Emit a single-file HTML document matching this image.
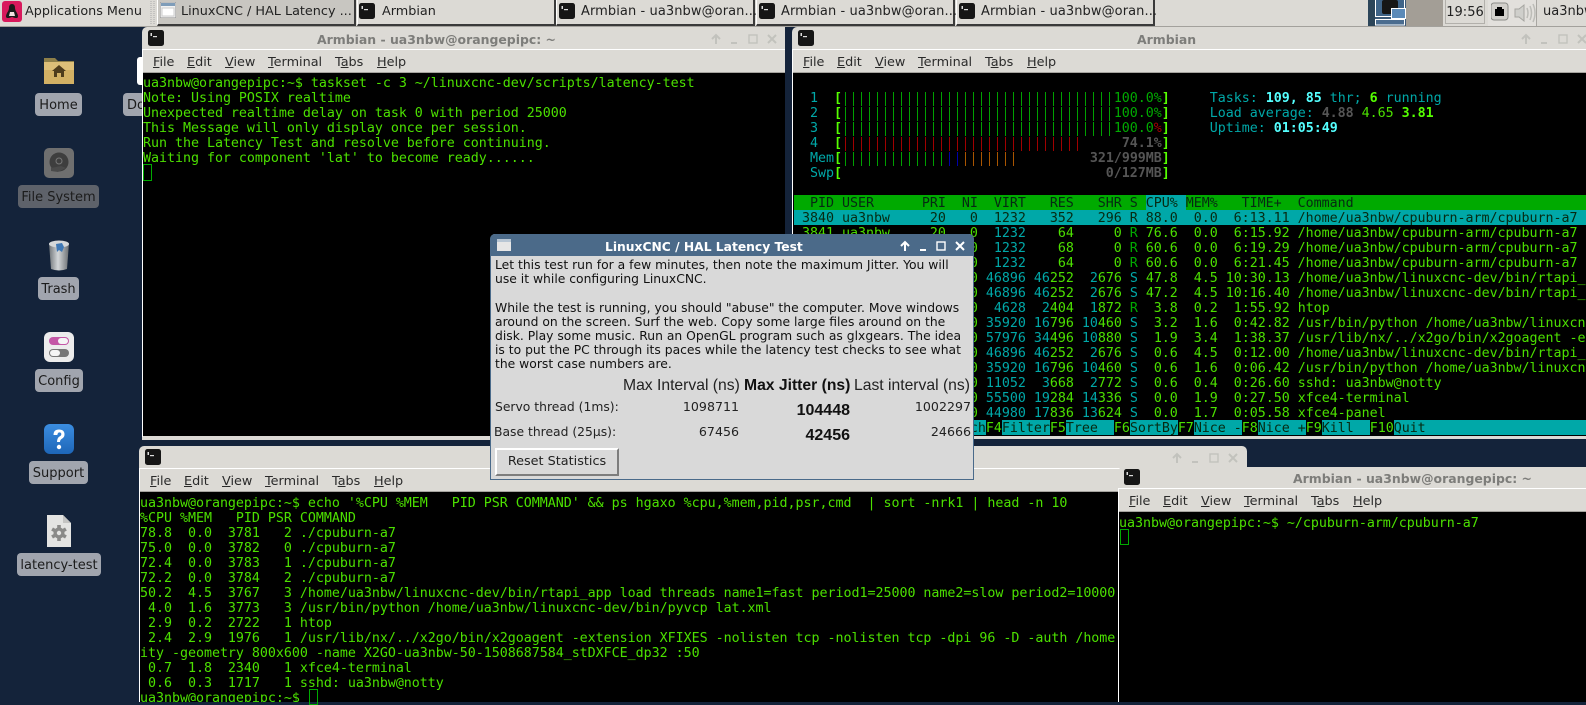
<!DOCTYPE html>
<html><head><meta charset="utf-8"><title>Armbian desktop</title>
<style>
html,body{margin:0;padding:0;width:1586px;height:702px;overflow:hidden;background:#14233a;font-family:"DejaVu Sans",sans-serif;font-size:13px;color:#1c1c1c}
div,pre,svg,span.a{box-sizing:border-box}
.a{position:absolute;white-space:pre}
.bg{background:#dcdad5}
.tb{position:absolute;top:0;height:26px;background:#dcdad5;border-left:1px solid #fff;border-right:2px solid #3a3a3a;border-bottom:2px solid #3a3a3a;width:199px}
.tt{position:absolute;top:3px;line-height:17px;left:24px;white-space:pre;color:#222;font-size:12.8px}
.lng{font-size:13px;letter-spacing:.08px}
.lb{position:absolute;height:23px;line-height:25px;text-align:center;background:#a1a5ae;border-radius:4px;color:#1c1c1c;white-space:pre}
.title{position:absolute;font-weight:bold;font-size:12.45px;color:#7d7d7a;line-height:16px;white-space:pre}
.m{position:absolute;line-height:16px;color:#2a2a2a;white-space:pre;font-size:12.8px}
.m u{text-decoration:underline}
.term{position:absolute;background:#000;overflow:hidden}
pre{position:absolute;margin:0;font-family:"DejaVu Sans Mono",monospace;font-size:13.33px;line-height:15px;color:#4ce000;white-space:pre;letter-spacing:-.03px}
pre .t{color:#00a8a8}pre .c{color:#55ffff;font-weight:bold}pre .g{color:#55ff00;font-weight:bold}
pre .d{color:#555;font-weight:bold}pre .f{color:#00aa00}pre .r{color:#aa0000}
pre .bv,pre .br,pre .bb,pre .bo{color:transparent;background-position:0 50%;background-size:8px 14px;background-repeat:repeat-x}
pre .bv{background-image:linear-gradient(90deg,transparent 3px,#00a000 3px,#00a000 4px,transparent 4px)}
pre .br{background-image:linear-gradient(90deg,transparent 3px,#a00000 3px,#a00000 4px,transparent 4px)}
pre .bb{background-image:linear-gradient(90deg,transparent 3px,#0000aa 3px,#0000aa 4px,transparent 4px)}
pre .bo{background-image:linear-gradient(90deg,transparent 3px,#aa5500 3px,#aa5500 4px,transparent 4px)}
pre .k{color:#062a12}
.cur{position:absolute;border:1px solid #00aa00;width:9px;height:16px}
.dl{position:absolute;line-height:14px;white-space:pre;color:#111;font-size:12.35px}
.h{position:absolute;font-family:"Liberation Sans",sans-serif;font-size:15.7px;line-height:18px;white-space:pre;color:#222}
.n{position:absolute;line-height:14px;font-size:12.6px;white-space:pre;color:#222;text-align:right}
.bn{position:absolute;font-family:"Liberation Sans",sans-serif;font-size:16px;font-weight:bold;line-height:18px;color:#111}
.fk{position:absolute;top:420px;height:15px;background:#000;width:16px}
</style></head><body>
<svg width="0" height="0" style="position:absolute">
<symbol id="ti" viewBox="0 0 16 16"><rect width="16" height="16" rx="2.5" fill="#161616"/><rect x="2.5" y="3" width="1.5" height="3" fill="#ddd"/><rect x="5" y="6" width="4" height="1.2" fill="#ddd"/></symbol>
<symbol id="wb" viewBox="0 0 72 14"><g fill="none" stroke="#c2c2bd" stroke-width="2"><path d="M5 12V3M1 7l4-4 4 4"/><path d="M20 11h6"/><rect x="38" y="3" width="8" height="8" stroke-width="1.4"/><path d="M57 3l8 8M65 3l-8 8"/></g></symbol>
</svg>

<!-- Desktop icons -->
<svg class="a" style="left:44px;top:57px" width="30" height="28" viewBox="0 0 30 28"><path d="M0 1h11l3 3h16v6H0z" fill="#8e7f49"/><rect y="5" width="30" height="22" fill="#d2b064"/><rect y="5" width="30" height="8" fill="#ddbf78"/><path d="M15 8l7 6h-2v6h-3v-4h-4v4H10v-6H8z" fill="#4e3c1c"/></svg>
<div class="lb" style="left:35px;top:93px;width:47px">Home</div>
<svg class="a" style="left:137px;top:57px" width="6" height="28"><rect x="0" width="12" height="28" rx="3" fill="#fff"/></svg>
<div class="lb" style="left:123px;top:93px;width:22px;text-align:left;padding-left:4px;overflow:hidden">Do</div>
<svg class="a" style="left:44px;top:148px" width="30" height="30" viewBox="0 0 30 30"><rect width="30" height="30" rx="5" fill="#6f6f6f"/><circle cx="15" cy="14" r="9.5" fill="#3e3e3e"/><circle cx="15" cy="13" r="3" fill="none" stroke="#777"/><path d="M7 20l10-2 5 2-8 4-7-1z" fill="#4a4a4a"/></svg>
<div class="lb" style="left:18px;top:185px;width:81px;background:#5e626a">File System</div>
<svg class="a" style="left:48px;top:240px" width="22" height="31" viewBox="0 0 22 31"><defs><linearGradient id="tr"><stop offset="0" stop-color="#6f7478"/><stop offset=".45" stop-color="#d4d7d9"/><stop offset="1" stop-color="#6a6e72"/></linearGradient></defs><path d="M1 3h20l-2 26q-8 3-16 0z" fill="url(#tr)"/><ellipse cx="11" cy="4" rx="10" ry="3.5" fill="#d5d8da"/><path d="M8 4l6-1 2 4-2 5-3-2-2 2z" fill="#3f78b5"/></svg>
<div class="lb" style="left:38px;top:277px;width:41px">Trash</div>
<svg class="a" style="left:44px;top:332px" width="30" height="30" viewBox="0 0 30 30"><rect width="30" height="30" rx="6" fill="#ececec"/><rect x="5" y="5" width="20" height="8" rx="4" fill="#c457a6"/><rect x="14" y="6" width="10" height="6" rx="3" fill="#f5f5f5"/><rect x="5" y="17" width="20" height="8" rx="4" fill="#777"/><rect x="6" y="18" width="10" height="6" rx="3" fill="#f5f5f5"/></svg>
<div class="lb" style="left:35px;top:369px;width:48px">Config</div>
<svg class="a" style="left:44px;top:424px" width="30" height="30" viewBox="0 0 30 30"><defs><linearGradient id="su" x2="0" y2="1"><stop offset="0" stop-color="#3b8de0"/><stop offset="1" stop-color="#1e66b8"/></linearGradient></defs><rect width="30" height="30" rx="6" fill="url(#su)"/><path d="M9.5 11q0-5.500 5.500-5.500t5.500 5q0 3-3 4.500-1.500 1-1.500 3h-3q0-4 2.500-5.500 1.800-1 1.800-2.300 0-1.800-1.800-1.800t-2.200 2.600z" fill="#fff"/><circle cx="15" cy="23" r="2.200" fill="#fff"/></svg>
<div class="lb" style="left:29px;top:461px;width:59px">Support</div>
<svg class="a" style="left:47px;top:515px" width="24" height="32" viewBox="0 0 24 32"><path d="M0 0h16l8 8v24H0z" fill="#e4e4e2"/><path d="M16 0l8 8h-8z" fill="#c4c4c2"/><g transform="translate(12 18)" fill="#8a8a88"><circle r="5.500"/><g id="gt"><rect x="-1.800" y="-8" width="3.600" height="16"/><rect x="-1.800" y="-8" width="3.600" height="16" transform="rotate(60)"/><rect x="-1.800" y="-8" width="3.600" height="16" transform="rotate(120)"/></g><circle r="2.200" fill="#e4e4e2"/></g></svg>
<div class="lb" style="left:17px;top:553px;width:84px">latency-test</div>

<!-- Panel -->
<div class="a bg" style="left:0;top:0;width:1586px;height:26px"></div>
<div class="a" style="left:0;top:26px;width:1586px;height:1px;background:#a3a19c"></div>
<svg class="a" style="left:2px;top:1px" width="20" height="21" viewBox="0 0 20 21"><rect width="20" height="21" rx="3" fill="#d8195c"/><path d="M10 3q3 0 3 4 0 2 2 5 2 4 0 5h-2l-3-1-3 1H5q-2-1 0-5 2-3 2-5 0-4 3-4z" fill="#1a1a1a"/><path d="M8 11h4l1 4h-6z" fill="#f0e0e0"/></svg>
<div class="a" style="left:25px;top:3px;line-height:17px;color:#222;font-size:12.75px">Applications Menu</div>
<svg class="a" style="left:150px;top:1px" width="6" height="24"><path d="M1 0v24M4 0v24" stroke="#aaa" stroke-dasharray="1 1" stroke-width="1"/></svg>
<div class="tb" style="left:157px;width:199px;background:#c8c6c1"><svg class="a" style="left:2px;top:2px" width="16" height="16" viewBox="0 0 16 16"><rect width="16" height="16" fill="#f2f2f2" stroke="#8a8a8a"/><rect x="1" y="1" width="14" height="3" fill="#7f9db9"/><rect x="2" y="6" width="12" height="8" fill="#fff" stroke="#ccc"/></svg><span class="tt" style="left:23px">LinuxCNC / HAL Latency ...</span></div>
<div class="tb" style="left:357px"><svg class="a" style="left:1px;top:3px" width="16" height="16"><use href="#ti"/></svg><span class="tt">Armbian</span></div>
<div class="tb" style="left:556px"><svg class="a" style="left:2px;top:3px" width="16" height="16"><use href="#ti"/></svg><span class="tt lng">Armbian - ua3nbw@oran...</span></div>
<div class="tb" style="left:756px"><svg class="a" style="left:2px;top:3px" width="16" height="16"><use href="#ti"/></svg><span class="tt lng">Armbian - ua3nbw@oran...</span></div>
<div class="tb" style="left:956px"><svg class="a" style="left:2px;top:3px" width="16" height="16"><use href="#ti"/></svg><span class="tt lng">Armbian - ua3nbw@oran...</span></div>
<svg class="a" style="left:1368px;top:0" width="75" height="26" viewBox="0 0 75 26"><rect width="38" height="26" fill="#3c5a78"/><rect width="7" height="26" fill="#2c4559"/><rect x="38" width="37" height="26" fill="#a39e96"/><rect x="7.500" y="-1" width="29" height="17.500" fill="#3f6488" stroke="#fff"/><rect x="14" width="16" height="14" rx="2" fill="#161616"/><rect x="23.500" y="8.500" width="14" height="10" fill="#5b8ab8" stroke="#fff"/><rect x="7.500" y="19.500" width="29" height="5.500" fill="#4a6c8f" stroke="#fff"/></svg>
<div class="a" style="left:1445px;top:-1px;width:40px;height:25px;border:1px solid #b2b0ab;text-align:center;line-height:25px;color:#222;font-size:13px">19:56</div>
<div class="a" style="left:1488px;top:0;width:49px;height:26px;background:#e2e0dc;border-right:1px solid #a8a6a1"></div>
<svg class="a" style="left:1491px;top:2px" width="46" height="22" viewBox="0 0 46 22"><rect x="0" y="1" width="17" height="17" rx="3" fill="#d2d0cb" stroke="#8c8c88"/><path d="M4 14V7h2V5h5v2h2v7z" fill="#000"/><path d="M24 7h4l5-4v16l-5-4h-4z" fill="#cfcfcb" stroke="#a5a5a0"/><path d="M36 6q2 5 0 10M39 4q3 7 0 14M42 2q4 9 0 18" fill="none" stroke="#bcbcb7" stroke-width="1.500"/></svg>
<div class="a" style="left:1543px;top:3px;line-height:17px;color:#222">ua3nbw</div>

<!-- Window 1 -->
<div class="a bg" style="left:142px;top:27px;width:643px;height:413px;border-top-left-radius:5px"></div>
<div class="a" style="left:143px;top:49px;width:642px;height:1px;background:#fff"></div>
<div class="a" style="left:142px;top:72px;width:643px;height:1px;background:#a5a39e"></div>
<svg class="a" style="left:148px;top:30px" width="16" height="16"><use href="#ti"/></svg>
<div class="title" style="left:317px;top:32px">Armbian - ua3nbw@orangepipc: ~</div>
<svg class="a" style="left:711px;top:32px" width="72" height="14"><use href="#wb"/></svg>
<div class="m" style="left:153px;top:55px"><u>F</u>ile</div><div class="m" style="left:187px;top:55px"><u>E</u>dit</div><div class="m" style="left:225px;top:55px"><u>V</u>iew</div><div class="m" style="left:268px;top:55px"><u>T</u>erminal</div><div class="m" style="left:335px;top:55px">T<u>a</u>bs</div><div class="m" style="left:377px;top:55px"><u>H</u>elp</div>
<div class="term" style="left:143px;top:73px;width:642px;height:363px"></div>
<div class="a" style="left:142px;top:49px;width:1px;height:388px;background:#fff"></div>
<pre style="left:143px;top:76px">ua3nbw@orangepipc:~$ taskset -c 3 ~/linuxcnc-dev/scripts/latency-test
Note: Using POSIX realtime
Unexpected realtime delay on task 0 with period 25000
This Message will only display once per session.
Run the Latency Test and resolve before continuing.
Waiting for component 'lat' to become ready......</pre>
<div class="cur" style="left:143px;top:164px;height:17px"></div>

<!-- htop window -->
<div class="a bg" style="left:792px;top:27px;width:794px;height:412px;border-top-left-radius:5px"></div>
<div class="a" style="left:793px;top:49px;width:793px;height:1px;background:#fff"></div>
<div class="a" style="left:792px;top:72px;width:794px;height:1px;background:#a5a39e"></div>
<svg class="a" style="left:798px;top:30px" width="16" height="16"><use href="#ti"/></svg>
<div class="title" style="left:1137px;top:32px">Armbian</div>
<svg class="a" style="left:1521px;top:32px" width="72" height="14"><use href="#wb"/></svg>
<div class="m" style="left:803px;top:55px"><u>F</u>ile</div><div class="m" style="left:837px;top:55px"><u>E</u>dit</div><div class="m" style="left:875px;top:55px"><u>V</u>iew</div><div class="m" style="left:918px;top:55px"><u>T</u>erminal</div><div class="m" style="left:985px;top:55px">T<u>a</u>bs</div><div class="m" style="left:1027px;top:55px"><u>H</u>elp</div>
<div class="term" style="left:793px;top:73px;width:793px;height:363px"></div>
<div class="a" style="left:792px;top:49px;width:1px;height:388px;background:#fff"></div>
<div class="a" style="left:794px;top:195px;width:792px;height:15px;background:#00aa00"></div>
<div class="a" style="left:1146px;top:195px;width:40px;height:15px;background:#00a8a8"></div>
<div class="a" style="left:794px;top:210px;width:792px;height:15px;background:#00a8a8"></div>
<div class="a" style="left:794px;top:420px;width:792px;height:15px;background:#00a8a8"></div>
<div class="fk" style="left:794px"></div><div class="fk" style="left:858px"></div><div class="fk" style="left:922px"></div><div class="fk" style="left:986px"></div><div class="fk" style="left:1050px"></div><div class="fk" style="left:1114px"></div><div class="fk" style="left:1178px"></div><div class="fk" style="left:1242px"></div><div class="fk" style="left:1306px"></div><div class="fk" style="left:1370px;width:24px"></div>
<div class="a" style="left:794px;top:75px;width:792px;height:361px;overflow:hidden"><pre style="left:0;top:1px">

  <span class="t">1</span>  <span class="g">[</span><span class="bv">||||||||||||||||||||||||||||||||||</span><span class="f">100.0%</span><span class="g">]</span>     <span class="t">Tasks: </span><span class="c">109, 85</span><span class="t"> thr; </span><span class="g">6</span><span class="t"> running</span>
  <span class="t">2</span>  <span class="g">[</span><span class="bv">||||||||||||||||||||||||||||||||||</span><span class="f">100.0%</span><span class="g">]</span>     <span class="t">Load average: </span><span class="d">4.88</span> <span style="color:#4ce000">4.65</span> <span class="g">3.81</span>
  <span class="t">3</span>  <span class="g">[</span><span class="bv">||||||||||||||||||||||||||||||||||</span><span class="f">100.0</span><span class="r">%</span><span class="g">]</span>     <span class="t">Uptime: </span><span class="c">01:05:49</span>
  <span class="t">4</span>  <span class="g">[</span><span class="br">||||||||||||||||||||||||||||||</span>     <span class="d">74.1%</span><span class="g">]</span>
  <span class="t">Mem</span><span class="g">[</span><span class="bv">|||||||||||||</span><span class="bb">||</span><span class="bo">|||||||</span>         <span class="d">321/999MB</span><span class="g">]</span>
  <span class="t">Swp</span><span class="g">[</span>                                 <span class="d">0/127MB</span><span class="g">]</span>

<span class="k">  PID USER      PRI  NI  VIRT   RES   SHR S CPU% MEM%   TIME+  Command</span>
<span class="k"> 3840 ua3nbw     20   0  1232   352   296 R 88.0  0.0  6:13.11 /home/ua3nbw/cpuburn-arm/cpuburn-a7</span>
 3841 ua3nbw     20   0  <span class="t">1232</span>    64     0 <span class="f">R</span> 76.6  0.0  6:15.92 /home/ua3nbw/cpuburn-arm/cpuburn-a7
 3842 ua3nbw     20   0  <span class="t">1232</span>    68     0 <span class="f">R</span> 60.6  0.0  6:19.29 /home/ua3nbw/cpuburn-arm/cpuburn-a7
 3843 ua3nbw     20   0  <span class="t">1232</span>    64     0 <span class="f">R</span> 60.6  0.0  6:21.45 /home/ua3nbw/cpuburn-arm/cpuburn-a7
 3767 ua3nbw     20   0 <span class="t">46896</span> <span class="t">46</span>252  <span class="t">2</span>676 <span class="t">S</span> 47.8  4.5 10:30.13 /home/ua3nbw/linuxcnc-dev/bin/rtapi_app
 3768 ua3nbw     20   0 <span class="t">46896</span> <span class="t">46</span>252  <span class="t">2</span>676 <span class="t">S</span> 47.2  4.5 10:16.40 /home/ua3nbw/linuxcnc-dev/bin/rtapi_app
 2722 ua3nbw     20   0  <span class="t">4628</span>  <span class="t">2</span>404  <span class="t">1</span>872 <span class="f">R</span>  3.8  0.2  1:55.92 htop
 3773 ua3nbw     20   0 <span class="t">35920</span> <span class="t">16</span>796 <span class="t">10</span>460 <span class="t">S</span>  3.2  1.6  0:42.82 /usr/bin/python /home/ua3nbw/linuxcnc-dev
 1976 ua3nbw     20   0 <span class="t">57976</span> <span class="t">34</span>496 <span class="t">10</span>880 <span class="t">S</span>  1.9  3.4  1:38.37 /usr/lib/nx/../x2go/bin/x2goagent -extension
 3769 ua3nbw     20   0 <span class="t">46896</span> <span class="t">46</span>252  <span class="t">2</span>676 <span class="t">S</span>  0.6  4.5  0:12.00 /home/ua3nbw/linuxcnc-dev/bin/rtapi_app
 3776 ua3nbw     20   0 <span class="t">35920</span> <span class="t">16</span>796 <span class="t">10</span>460 <span class="t">S</span>  0.6  1.6  0:06.42 /usr/bin/python /home/ua3nbw/linuxcnc-dev
 1717 ua3nbw     20   0 <span class="t">11052</span>  <span class="t">3</span>668  <span class="t">2</span>772 <span class="t">S</span>  0.6  0.4  0:26.60 sshd: ua3nbw@notty
 2340 ua3nbw     20   0 <span class="t">55500</span> <span class="t">19</span>284 <span class="t">14</span>336 <span class="t">S</span>  0.0  1.9  0:27.50 xfce4-terminal
 1698 ua3nbw     20   0 <span class="t">44980</span> <span class="t">17</span>836 <span class="t">13</span>624 <span class="t">S</span>  0.0  1.7  0:05.58 xfce4-panel
F1<span class="k">Help  </span>F2<span class="k">Setup </span>F3<span class="k">Search</span>F4<span class="k">Filter</span>F5<span class="k">Tree  </span>F6<span class="k">SortBy</span>F7<span class="k">Nice -</span>F8<span class="k">Nice +</span>F9<span class="k">Kill  </span>F10<span class="k">Quit</span></pre></div>

<!-- Bottom terminal -->
<div class="a bg" style="left:139px;top:446px;width:1108px;height:256px;border-top-left-radius:5px;border-top-right-radius:5px"></div>
<div class="a" style="left:140px;top:468px;width:1107px;height:1px;background:#fff"></div>
<div class="a" style="left:139px;top:491px;width:1108px;height:1px;background:#a5a39e"></div>
<svg class="a" style="left:145px;top:449px" width="16" height="16"><use href="#ti"/></svg>
<svg class="a" style="left:1172px;top:451px" width="72" height="14"><use href="#wb"/></svg>
<div class="m" style="left:150px;top:474px"><u>F</u>ile</div><div class="m" style="left:184px;top:474px"><u>E</u>dit</div><div class="m" style="left:222px;top:474px"><u>V</u>iew</div><div class="m" style="left:265px;top:474px"><u>T</u>erminal</div><div class="m" style="left:332px;top:474px">T<u>a</u>bs</div><div class="m" style="left:374px;top:474px"><u>H</u>elp</div>
<div class="term" style="left:140px;top:492px;width:1107px;height:210px"></div>
<div class="a" style="left:139px;top:468px;width:1px;height:234px;background:#fff"></div>
<div class="a" style="left:140px;top:495px;width:978px;height:207px;overflow:hidden"><pre style="left:0;top:1px">ua3nbw@orangepipc:~$ echo '%CPU %MEM   PID PSR COMMAND' &amp;&amp; ps hgaxo %cpu,%mem,pid,psr,cmd  | sort -nrk1 | head -n 10
%CPU %MEM   PID PSR COMMAND
78.8  0.0  3781   2 ./cpuburn-a7
75.0  0.0  3782   0 ./cpuburn-a7
72.4  0.0  3783   1 ./cpuburn-a7
72.2  0.0  3784   2 ./cpuburn-a7
50.2  4.5  3767   3 /home/ua3nbw/linuxcnc-dev/bin/rtapi_app load threads name1=fast period1=25000 name2=slow period2=10000
 4.0  1.6  3773   3 /usr/bin/python /home/ua3nbw/linuxcnc-dev/bin/pyvcp lat.xml
 2.9  0.2  2722   1 htop
 2.4  2.9  1976   1 /usr/lib/nx/../x2go/bin/x2goagent -extension XFIXES -nolisten tcp -nolisten tcp -dpi 96 -D -auth /home
ity -geometry 800x600 -name X2GO-ua3nbw-50-1508687584_stDXFCE_dp32 :50
 0.7  1.8  2340   1 xfce4-terminal
 0.6  0.3  1717   1 sshd: ua3nbw@notty
ua3nbw@orangepipc:~$ </pre></div>
<div class="cur" style="left:309px;top:689px"></div>

<!-- Right terminal -->
<div class="a bg" style="left:1118px;top:467px;width:468px;height:235px;border-top-left-radius:5px"></div>
<div class="a" style="left:1119px;top:488px;width:467px;height:1px;background:#fff"></div>
<div class="a" style="left:1118px;top:511px;width:468px;height:1px;background:#a5a39e"></div>
<svg class="a" style="left:1124px;top:469px" width="16" height="16"><use href="#ti"/></svg>
<div class="title" style="left:1293px;top:471px">Armbian - ua3nbw@orangepipc: ~</div>
<div class="m" style="left:1129px;top:494px"><u>F</u>ile</div><div class="m" style="left:1163px;top:494px"><u>E</u>dit</div><div class="m" style="left:1201px;top:494px"><u>V</u>iew</div><div class="m" style="left:1244px;top:494px"><u>T</u>erminal</div><div class="m" style="left:1311px;top:494px">T<u>a</u>bs</div><div class="m" style="left:1353px;top:494px"><u>H</u>elp</div>
<div class="term" style="left:1119px;top:512px;width:467px;height:190px"></div>
<div class="a" style="left:1118px;top:488px;width:1px;height:214px;background:#fff"></div>
<pre style="left:1119px;top:516px">ua3nbw@orangepipc:~$ ~/cpuburn-arm/cpuburn-a7</pre>
<div class="cur" style="left:1120px;top:529px"></div>

<!-- Dialog -->
<div class="a" style="left:490px;top:234px;width:484px;height:246px;background:#d9d9d9;border:1px solid #4a6a8a;border-top:none;border-radius:5px 5px 0 0"></div>
<div class="a" style="left:490px;top:234px;width:484px;height:22px;background:#4b6a89;border-radius:5px 5px 0 0"></div>
<svg class="a" style="left:497px;top:239px" width="14" height="12" viewBox="0 0 14 12"><rect width="14" height="12" fill="#e6e6e6"/><rect width="14" height="3" fill="#b8c6d4"/></svg>
<div class="a" style="left:605px;top:239px;font-weight:bold;color:#fff;line-height:16px;font-size:12.3px">LinuxCNC / HAL Latency Test</div>
<svg class="a" style="left:899px;top:239px" width="72" height="14"><g fill="none" stroke="#fff" stroke-width="2"><path d="M6 12V3M2 7l4-4 4 4"/><path d="M21 11h6"/><rect x="38" y="3" width="8" height="8" stroke-width="1.400"/><path d="M57 3l8 8M65 3l-8 8"/></g></svg>
<div class="dl" style="left:495px;top:258px">Let this test run for a few minutes, then note the maximum Jitter. You will</div>
<div class="dl" style="left:495px;top:272px">use it while configuring LinuxCNC.</div>
<div class="dl" style="left:495px;top:301px">While the test is running, you should "abuse" the computer. Move windows</div>
<div class="dl" style="left:495px;top:315px">around on the screen. Surf the web. Copy some large files around on the</div>
<div class="dl" style="left:495px;top:329px">disk. Play some music. Run an OpenGL program such as glxgears. The idea</div>
<div class="dl" style="left:495px;top:343px">is to put the PC through its paces while the latency test checks to see what</div>
<div class="dl" style="left:495px;top:357px">the worst case numbers are.</div>
<div class="h" style="left:623px;top:377px">Max Interval (ns)</div>
<div class="h" style="left:744px;top:377px;font-weight:bold;color:#111">Max Jitter (ns)</div>
<div class="h" style="left:854px;top:377px">Last interval (ns)</div>
<div class="n" style="left:495px;top:400px;font-size:12.35px">Servo thread (1ms):</div>
<div class="n" style="left:494px;top:425px;font-size:12.35px">Base thread (25µs):</div>
<div class="n" style="right:847px;top:400px">1098711</div>
<div class="n" style="right:847px;top:425px">67456</div>
<div class="bn" style="right:736px;top:402px">104448</div>
<div class="bn" style="right:736px;top:427px">42456</div>
<div class="n" style="right:615px;top:400px">1002297</div>
<div class="n" style="right:615px;top:425px">24666</div>
<div class="a" style="left:495px;top:448px;width:124px;height:28px;background:#d9d9d9;border:2px solid;border-color:#fff #7d7d7d #7d7d7d #fff;line-height:23px;text-align:center;color:#222;font-size:12.8px">Reset Statistics</div>
</body></html>
